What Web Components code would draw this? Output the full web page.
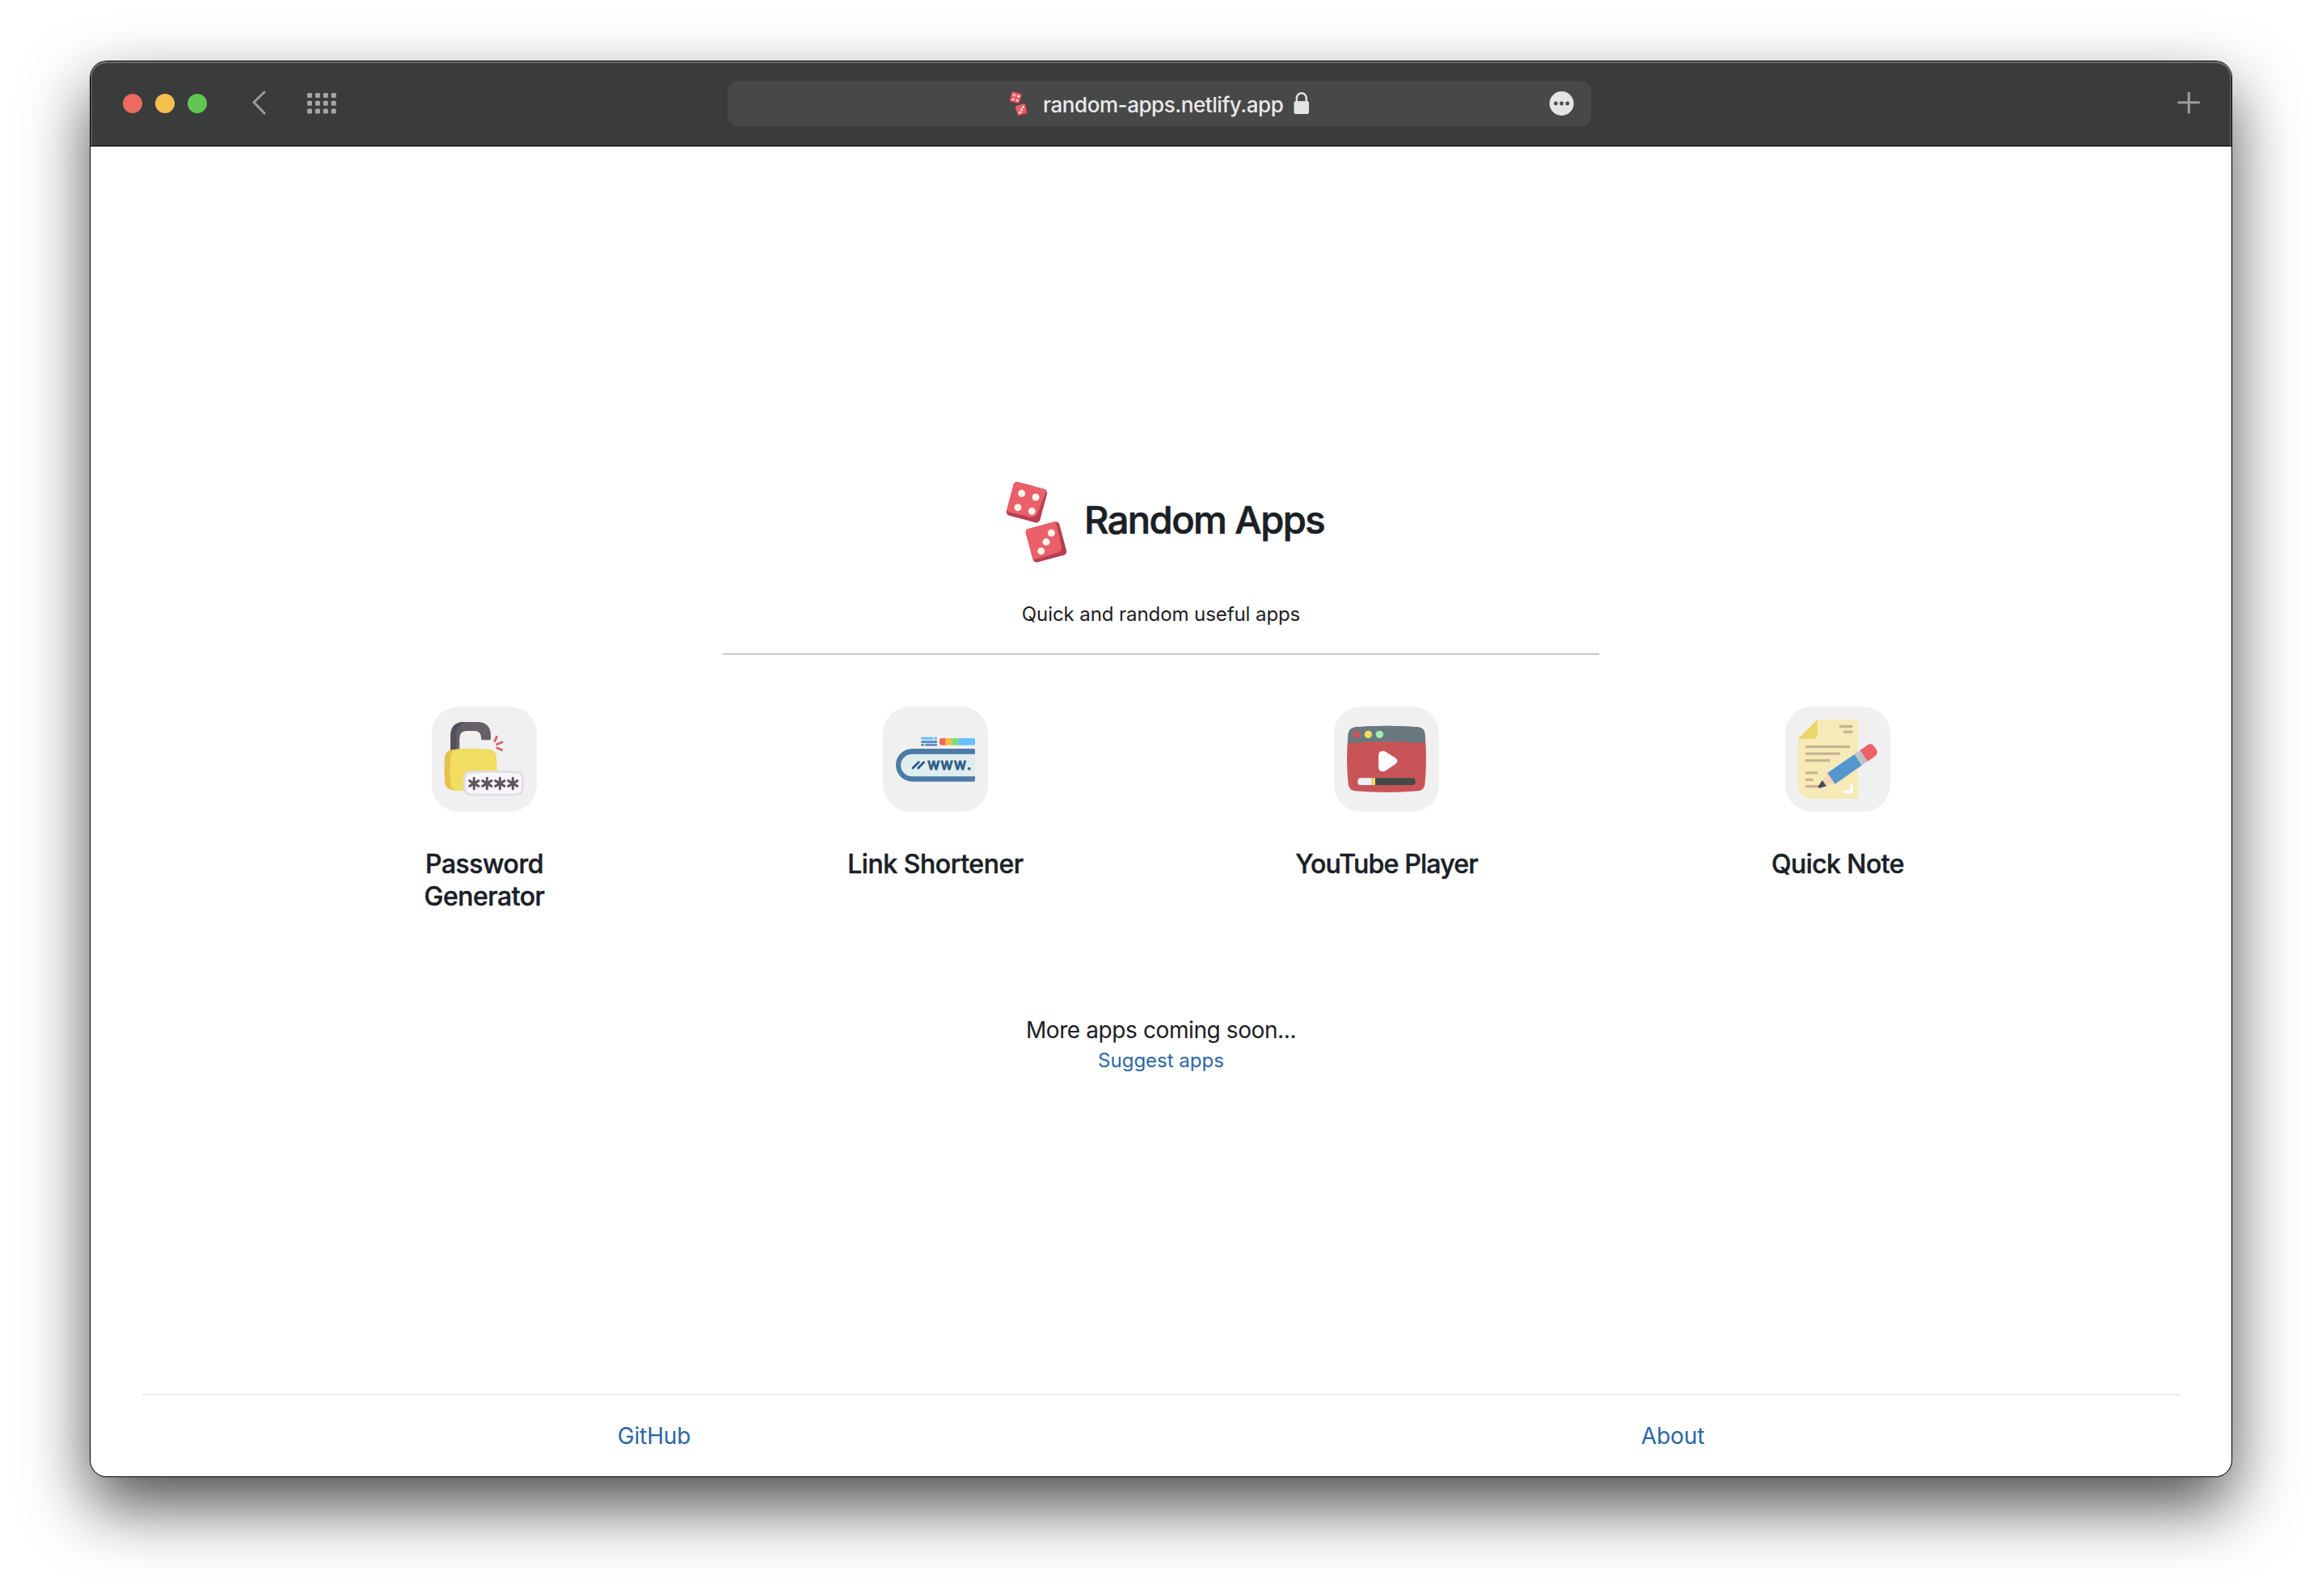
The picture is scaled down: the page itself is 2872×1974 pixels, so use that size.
<!DOCTYPE html>
<html lang="en">
<head>
<meta charset="utf-8">
<title>Random Apps</title>
<style>
  html, body { margin: 0; background: #fff; }
  body { width: 2872px; height: 1974px; overflow: hidden; display: flex; font-family: Inter, "Liberation Sans", sans-serif; color: #1a2026; }
</style>
</head>
<body>
<browser-window>
  <browser-toolbar slot="toolbar">random-apps.netlify.app</browser-toolbar>
  <page-hero heading="Random Apps">Quick and random useful apps</page-hero>
  <app-grid>
    <app-tile icon="lock" style="--track:-.5px">Password Generator</app-tile>
    <app-tile icon="link" style="--track:-.44px">Link Shortener</app-tile>
    <app-tile icon="player" style="--track:-.78px">YouTube Player</app-tile>
    <app-tile icon="note" style="--track:-.58px">Quick Note</app-tile>
  </app-grid>
  <coming-soon link="Suggest apps">More apps coming soon...</coming-soon>
  <page-footer><a slot="left">GitHub</a><a slot="right">About</a></page-footer>
</browser-window>

<script>
function element(name, render) {
  customElements.define(name, class extends HTMLElement {
    constructor() {
      super();
      this.attachShadow({ mode: 'open' });
    }
    connectedCallback() {
      this.shadowRoot.innerHTML = render(this);
    }
  });
}

const ICONS = {
  lock: `<svg viewBox="72 42 390 390">
    <path fill="#675f67" d="M142 205V150Q142 99 193 99H240Q292 99 291 152V161Q291 166 286 166H261Q256 166 256 161Q256 132 230 132H204Q175 132 175 160V205Z"/>
    <path fill="#544f58" d="M142 205V150Q142 99 193 99H205Q163 104 163 150V205Z"/>
    <path fill="#e5c24f" d="M120 233Q121 204 150 201Q216 195 283 201Q311 204 312 233Q314 276 312 320Q311 349 283 352Q216 357 150 352Q121 349 120 320Q117 276 120 233Z"/>
    <path fill="#f0dd61" d="M141 233Q142 204 165 200Q216 196 283 201Q311 204 312 233Q314 276 312 320Q311 349 283 352Q216 355 165 352Q142 349 141 320Q139 276 141 233Z"/>
    <path fill="#f8f6fb" stroke="#e0dfe4" stroke-width="9" d="M194 307Q195 287 215 285Q302 281 389 285Q408 287 409 307Q410 327 409 346Q408 366 389 368Q302 372 215 368Q195 366 194 346Q193 327 194 307Z"/>
    <g stroke="#5f575f" stroke-width="9" stroke-linecap="round">
      <path d="M229 307V347M212 317L246 337M246 317L212 337"/>
      <path d="M277 307V347M260 317L294 337M294 317L260 337"/>
      <path d="M325 307V347M308 317L342 337M342 317L308 337"/>
      <path d="M373 307V347M356 317L390 337M390 317L356 337"/>
    </g>
    <path fill="none" stroke="#cf6672" stroke-width="8.5" stroke-linecap="round" d="M313 154L306 170M314 182L333 174M314 195L332 203"/>
  </svg>`,
  link: `<svg viewBox="186 42 390 390">
    <g stroke-width="9" stroke-linecap="round">
      <path stroke="#66c0fa" d="M331.500 160H369M380 160H383.500"/>
      <path stroke="#5e91c4" d="M331.500 172.500H383.500M331.500 184H335M347 184H383.500"/>
    </g>
    <path fill="#ed6a53" d="M419 159H403Q396 159 396 166V178Q396 185 403 185H419Z"/>
    <path fill="#f4bd45" d="M419 159H442V185H419Z"/>
    <path fill="#77de75" d="M442 159H466V185H442Z"/>
    <path fill="#66c0fa" d="M466 159H523Q528 159 528 164V180Q528 185 523 185H466Z"/>
    <path fill="#4c7ba6" d="M523 198H295A61 61 0 0 0 295 320H523Q528 320 528 315V203Q528 198 523 198Z"/>
    <path fill="#dfedef" d="M528 218H294A41.500 41.500 0 0 0 294 301H528Z"/>
    <path stroke="#2c5a86" stroke-width="8.500" stroke-linecap="round" d="M297 270L319 248M317 270L338 248"/>
    <text x="351 400 449 497" y="275.500" fill="#2c5a86" stroke="#2c5a86" stroke-width="2.500" stroke-linejoin="round" font-family="Inter, sans-serif" font-size="56" font-weight="500">www.</text>
  </svg>`,
  player: `<svg viewBox="210 42 390 390">
    <path fill="#c95458" d="M290 118Q405 109 522 118Q545 121 547 142Q557 238 547 330Q545 352 522 355Q405 365 288 355Q266 352 263 330Q253 238 263 142Q266 121 290 118Z"/>
    <path fill="#68787f" d="M290 118Q405 109 522 118Q545 121 547 142L549.500 178Q405 165 260.500 178L263 142Q266 121 290 118Z"/>
    <circle cx="295" cy="145" r="14" fill="#c95458"/><circle cx="337" cy="145" r="14" fill="#f0dc61"/><circle cx="379" cy="145" r="14" fill="#9fefac"/>
    <path fill="#fff" d="M375 225Q375 206 391 206Q396 206 402 210L437 232Q454 244 437 256L402 279Q396 283 391 283Q375 283 375 264Z"/>
    <path fill="#434a4a" d="M362 307H502Q512 307 512 320Q512 333 502 333H362Z"/>
    <path fill="#e8f3fe" d="M350 307H308Q298 307 298 320Q298 333 308 333H350Z"/>
    <path fill="#eed95f" d="M350 307H363V333H350Z"/>
  </svg>`,
  note: `<svg viewBox="114 42 390 390">
    <path fill="#f6eab7" d="M234 90H378Q385 90 385 97V377Q385 384 378 384H209A47 47 0 0 1 162 337V161Z"/>
    <path fill="#ebd56a" d="M234 90V144Q234 161 217 161H162Z"/>
    <path stroke="#c8b395" stroke-width="10" stroke-linecap="round" d="M319 115.500H360M334 135.500H360M193 191H350M193 216.500H313M193 242H277M193 287.500H231M193 313H214M193 338H240"/>
    <path fill="none" stroke="#fff" stroke-width="10" stroke-linecap="round" d="M360 333V358H334"/>
    <path fill="#f6d6b3" d="M272 287L299 328L266 336L252 315Z"/>
    <path fill="#454f5e" d="M252 315L267 337L242 344Q235 344 237 337Z"/>
    <path fill="#5596cf" d="M372 218L398 260L299 329L271 288Z"/>
    <path fill="#bdc2c9" d="M372 218L392 204L420 245L398 260Z"/>
    <path fill="#ed6169" d="M392 204L421 184Q434 176 443 188L453 202Q460 214 449 225L420 245Z"/>
  </svg>`
};

customElements.define('dice-logo', class extends HTMLElement {
  constructor() {
    super();
    this.attachShadow({ mode: 'open' }).innerHTML = `
      <style>:host { display: block; flex: none; } svg { display: block; width: 100%; height: 100%; }</style>
      <svg viewBox="66 36 240 324">
        <g transform="translate(150 124) rotate(15) scale(1.055)"><rect x="-61" y="-61" width="122" height="122" rx="14" fill="#b63f50"/><path d="M-61-49Q-61-61-49-61H47Q59-61 56-49L46 27Q42 45 26 47L-49 50Q-60 50-61 38Z" fill="#eb5f6a"/></g>
        <g transform="translate(222 271) rotate(-15) scale(1.055)"><rect x="-61" y="-61" width="122" height="122" rx="14" fill="#b63f50"/><path d="M-61-49Q-61-61-49-61H40Q52-61 51-49L48 28Q47 46 28 47L-49 49Q-60 49-61 40Z" fill="#eb5f6a"/></g>
        <g fill="#fff6e6"><circle cx="131" cy="91" r="13.500"/><circle cx="183" cy="105" r="13.500"/><circle cx="117" cy="143" r="13.500"/><circle cx="169" cy="157" r="13.500"/>
        <circle cx="241" cy="238" r="13.500"/><circle cx="222" cy="271" r="13.500"/><circle cx="203" cy="305" r="13.500"/></g>
      </svg>`;
  }
});

element('browser-window', () => `
  <style>
    :host { display: flex; flex: 1; margin: 76px 112px 148px; }
    .frame { flex: 1; display: flex; flex-direction: column; border-radius: 20px; background: #fff;
      box-shadow: 0 0 0 1px #000, 0 36px 82px rgba(0,0,0,.7); }
    main { flex: 1; display: flex; flex-direction: column; border-top: 1px solid #bdbdbd; }
  </style>
  <div class="frame"><slot name="toolbar"></slot><main><slot></slot></main></div>`);

element('browser-toolbar', () => `
  <style>
    :host { display: flex; align-items: center; height: 104px; border-bottom: 1px solid #000; background: #3a3b3b;
      border-radius: 20px 20px 0 0; box-shadow: inset 0 2px 0 #707170, inset 2px 0 0 #565756, inset -2px 0 0 #565756; }
    .side { width: 788px; display: flex; align-items: center; box-sizing: border-box; }
    .lights { display: flex; gap: 16px; margin-left: 40px; }
    .lights i { width: 24px; height: 24px; border-radius: 50%; background: #ed6a5f; }
    .lights i:nth-child(2) { background: #f5bf50; }
    .lights i:nth-child(3) { background: #62c655; }
    svg { display: block; flex: none; }
    .back { margin-left: 55px; }
    .apps { margin-left: 49px; }
    .field { width: 1068px; height: 56px; border-radius: 12px; background: #474848; display: flex; align-items: center; box-sizing: border-box; padding: 0 21px 0 348px; color: #e9e9e9; }
    .url { font-size: 26px; font-weight: 500; line-height: 56px; margin: 3px 13px 0 18px; letter-spacing: -.44px; white-space: nowrap; }
    dice-logo { width: 24px; height: 33px; }
    .more { margin-left: auto; }
    .end { flex: 1; display: flex; justify-content: flex-end; padding-right: 39px; }
  </style>
  <div class="side">
    <div class="lights"><i></i><i></i><i></i></div>
    <svg class="back" width="20" height="32" viewBox="0 0 20 32"><path d="M16 3L3 15.500L16 29" transform="translate(0 -1)" fill="none" stroke="#9b9c9b" stroke-width="3" stroke-linecap="round" stroke-linejoin="round"/></svg>
    <svg class="apps" width="36" height="26" viewBox="0 0 36 26"><g fill="#a5a6a5">${[0,1,2].map(r => [0,1,2,3].map(c => `<rect x="${c * 9.9}" y="${r * 9.8}" width="6" height="6" rx="1.200"/>`).join('')).join('')}</g></svg>
  </div>
  <div class="field">
    <dice-logo></dice-logo>
    <span class="url"><slot></slot></span>
    <svg width="20" height="28" viewBox="0 0 20 28"><rect x=".5" y="11" width="18.500" height="16" rx="2.500" fill="#e4e4e4"/><path d="M3.800 13V8C3.800-1 15.800-1 15.800 8V13" fill="none" stroke="#e4e4e4" stroke-width="2.400"/></svg>
    <svg class="more" width="31" height="31" viewBox="0 0 31 31"><circle cx="15.500" cy="15" r="15" fill="#e4e4e4"/><g fill="#474848"><circle cx="8.300" cy="15" r="2.400"/><circle cx="15.500" cy="15" r="2.400"/><circle cx="22.700" cy="15" r="2.400"/></g></svg>
  </div>
  <div class="end"><svg width="28" height="28" viewBox="0 0 28 28"><path d="M14 0V25M1.500 12.500H26.500" transform="translate(.3 .2)" stroke="#9b9c9b" stroke-width="3" stroke-linecap="round"/></svg></div>`);

element('page-hero', el => `
  <style>
    :host { display: flex; flex-direction: column; align-items: center; margin-top: 410px; }
    .row { display: flex; gap: 19px; margin-left: 8px; }
    dice-logo { width: 80px; height: 108px; }
    h1 { margin: 0; font-size: 47px; font-weight: 500; line-height: 101px; letter-spacing: -1.5px; -webkit-text-stroke: .7px currentColor; }
    p { margin: 40px 0 0; font-size: 24px; line-height: 40px; letter-spacing: -.08px; }
    hr { width: 1084px; height: 2px; margin: 28px 0 0; border: 0; background: #c8c8c9; }
  </style>
  <div class="row"><dice-logo></dice-logo><h1>${el.getAttribute('heading')}</h1></div>
  <p><slot></slot></p><hr>`);

element('app-grid', () => `
  <style>:host { display: grid; grid-template-columns: repeat(4, 558px); justify-content: center; margin-top: 64px; height: 254px; }</style>
  <slot></slot>`);

element('app-tile', el => `
  <style>
    :host { display: flex; flex-direction: column; align-items: center; }
    .icon { width: 130px; height: 130px; border-radius: 33px; background: #f0f0f0; }
    svg { display: block; width: 130px; height: 130px; }
    .label { width: 240px; margin-top: 45px; font-size: 32px; font-weight: 500; line-height: 40px; letter-spacing: var(--track); text-align: center; -webkit-text-stroke: .45px currentColor; }
  </style>
  <div class="icon">${ICONS[el.getAttribute('icon')]}</div>
  <div class="label"><slot></slot></div>`);

element('coming-soon', el => `
  <style>
    :host { display: flex; flex-direction: column; align-items: center; margin-top: 126px; }
    p { margin: 0; font-size: 28px; line-height: 40px; letter-spacing: -.4px; }
    a { font-size: 24px; line-height: 35px; color: #2a67a6; }
  </style>
  <p><slot></slot></p><a>${el.getAttribute('link')}</a>`);

element('page-footer', () => `
  <style>
    :host { display: grid; grid-template-columns: 1fr 1fr; margin: auto 64px 0; height: 100px; border-top: 2px solid #e9e9e9; font-size: 28px; line-height: 100px; text-align: center; color: #2a67a6; letter-spacing: -.1px; }
    div { padding-left: 6px; }
  </style>
  <div><slot name="left"></slot></div><div><slot name="right"></slot></div>`);
</script>
</body>
</html>
